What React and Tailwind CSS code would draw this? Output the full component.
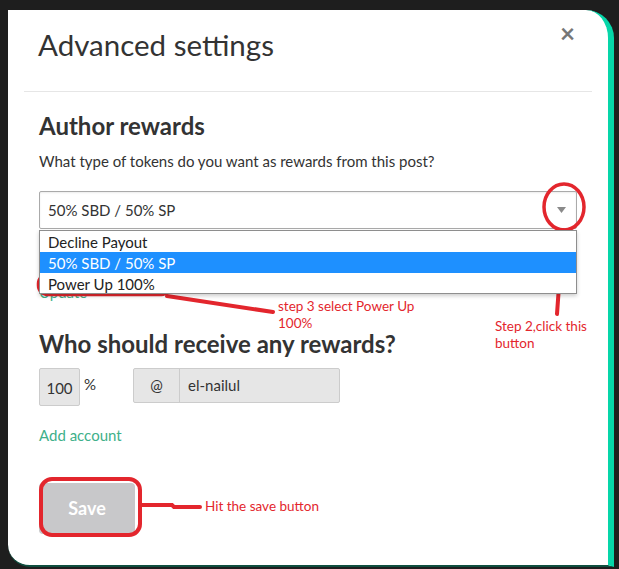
import React from "react";

const RED = "#e3262d";

const Annotations = () => (
  <>
    <svg className="absolute left-0 top-0 pointer-events-none" width="619" height="569" fill="none">
      {/* step 3 */}
      <rect x="38.5" y="274.5" width="132" height="20" rx="9" stroke={RED} strokeWidth="3.5" />
      <path d="M167 296 L273 312" stroke={RED} strokeWidth="4" strokeLinecap="round" />
      {/* step 2 */}
      <ellipse cx="564" cy="207" rx="20" ry="23" stroke={RED} strokeWidth="3.5" />
      <path d="M563 230 L557 314" stroke={RED} strokeWidth="4" strokeLinecap="round" />
      {/* save */}
      <rect x="41" y="479" width="99" height="56" rx="11" stroke={RED} strokeWidth="4" />
      <path d="M142 505 L172 505 L174 507 L200 507" stroke={RED} strokeWidth="4" strokeLinecap="round" />
    </svg>
    <div className="absolute left-[278px] top-[298px] text-[13.5px] leading-[17px] text-[#e3262d] font-['Lato',sans-serif]">
      <div>step 3 select Power Up</div>
      <div>100%</div>
    </div>
    <div className="absolute left-[495px] top-[318px] text-[13.5px] leading-[17px] text-[#e3262d] font-['Lato',sans-serif]">
      <div>Step 2,click this</div>
      <div>button</div>
    </div>
    <div className="absolute left-[205px] top-[498px] text-[13.5px] leading-[17px] text-[#e3262d] font-['Lato',sans-serif]">
      Hit the save button
    </div>
  </>
);

const App = () => {
  return (
    <div className="relative w-[619px] h-[569px] overflow-hidden bg-[#1e1e1e] font-['Lato',sans-serif]">
      <div className="pt-[10px] pl-[8px]">
        <div className="relative w-[606px] h-[557px] bg-white rounded-tr-[28px] rounded-bl-[22px] border-r-[6px] border-b-[2px] border-r-[#06d6a9] border-b-[#0f4f3f]">
          {/* header */}
          <div className="pt-[17px] pl-[30px] pr-[30px] flex items-start justify-between">
            <h1 className="text-[29.5px] leading-[36px] text-[#333] font-normal">Advanced settings</h1>
            <button className="text-[#777] text-[26px] leading-[26px] font-bold mt-[-7px] mr-[3px] font-['Liberation Sans',sans-serif]">×</button>
          </div>
          <div className="mt-[28px] mx-[16px] h-px bg-[#e6e6e6]" />

          <div className="pl-[31px] pr-[31px]">
            <h2 className="mt-[20px] text-[24px] leading-[28px] font-bold text-[#333]">Author rewards</h2>
            <p className="mt-[11px] text-[15px] leading-[20px] text-[#333]">
              What type of tokens do you want as rewards from this post?
            </p>

            <div className="relative mt-[20px]">
              <div className="flex items-center justify-between h-[38px] border border-[#aaa] rounded-[2px] pl-[8px] pr-[10px] text-[15px] text-[#333] bg-white shadow-[inset_0_1px_2px_rgba(0,0,0,0.08)]">
                <span>50% SBD / 50% SP</span>
                <svg width="9" height="6" viewBox="0 0 9 6"><path d="M0 0 H9 L4.5 6 Z" fill="#8a8a8a" /></svg>
              </div>
              <div className="text-[15px] leading-[20px] text-[#40b08a] mt-[53px]">Update</div>

              {/* open dropdown */}
              <div className="absolute left-0 top-[39px] w-[538px] border border-[#8e8e8e] bg-white shadow-[0_2px_4px_rgba(0,0,0,0.2)] text-[15px] leading-[20px] text-[#222] z-10">
                <div className="h-[21px] pl-[8px] pt-[1px]">Decline Payout</div>
                <div className="h-[21px] pl-[8px] pt-[1px] bg-[#1e90ff] text-white">50% SBD / 50% SP</div>
                <div className="h-[20px] pl-[8px] pt-[1px]">Power Up 100%</div>
              </div>
            </div>

            <h2 className="mt-[28px] text-[24px] leading-[28px] font-bold text-[#333]">Who should receive any rewards?</h2>

            <div className="mt-[10px] flex items-start">
              <div className="w-[41px] h-[38px] flex items-center justify-center pt-[3px] bg-[#e6e6e6] border border-[#ccc] rounded-[2px] text-[15px] text-[#333]">100</div>
              <span className="ml-[4px] mt-[5px] text-[15px] text-[#333]">%</span>
              <div className="ml-[37px] flex h-[35px] border border-[#ccc] rounded-[2px] bg-[#e6e6e6] text-[15px] text-[#333]">
                <div className="w-[46px] flex items-center justify-center border-r border-[#ccc]">@</div>
                <div className="w-[159px] flex items-center pl-[8px]">el-nailul</div>
              </div>
            </div>

            <div className="mt-[19px] text-[15px] leading-[20px] text-[#40b08a]">Add account</div>

            <button className="mt-[38px] w-[96px] h-[51px] rounded-[4px] bg-[#c8c8ca] text-white text-[18px] font-bold font-['Liberation Sans',sans-serif]">
              Save
            </button>
          </div>
        </div>
      </div>
      <Annotations />
    </div>
  );
};

export default App;
